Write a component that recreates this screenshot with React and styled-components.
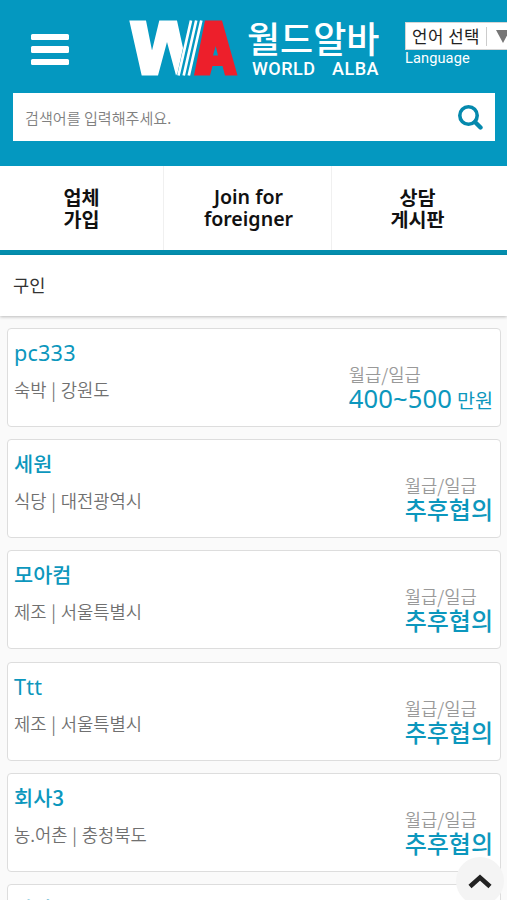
import React from "react";
import styled, { createGlobalStyle } from "styled-components";

const Global = createGlobalStyle`
  * { box-sizing: border-box; }
  html, body { margin: 0; height: 900px; overflow: hidden; }
  body {
    background: #fafafa;
    font-family: "Noto Sans", "Noto Sans CJK KR", sans-serif;
    color: #333;
  }
`;
const Page = styled.div`
  position: relative;
  width: 507px;
  height: 900px;
  overflow: hidden;
`;
const Header = styled.header`
  height: 166px;
  background: #0498c0;
`;
const TopBar = styled.div`
  display: flex;
  align-items: flex-start;
  height: 93px;
  padding-left: 31px;
`;
const MenuButton = styled.button`
  display: flex;
  flex: none;
  flex-direction: column;
  gap: 6px;
  width: 38px;
  margin: 34px 60px 0 0;
  padding: 0;
  border: 0;
  background: none;
`;
const MenuBar = styled.span`
  height: 6.4px;
  border-radius: 1.5px;
  background: #fff;
`;
const Brand = styled.a`
  display: flex;
  flex: none;
  width: 276px;
  padding-top: 20px;
  color: #fff;
`;
const BrandText = styled.div`
  display: flex;
  flex-direction: column;
  margin-left: 8px;
  white-space: nowrap;
`;
const BrandName = styled.span`
  height: 38px;
  font: 500 36px/35px "Noto Sans CJK KR", sans-serif;
`;
const BrandLatin = styled.span`
  display: flex;
  justify-content: space-between;
  width: 127px;
  margin-left: 5px;
  font: 500 18px/21px Roboto, sans-serif;
  letter-spacing: 0.5px;
`;
const Language = styled.div`
  flex: none;
  padding-top: 22px;
  color: #fff;
`;
const LanguageSelect = styled.div`
  display: flex;
  align-items: center;
  width: 120px;
  height: 28px;
  padding-left: 6px;
  border: 1px solid #d5d5d5;
  background: #fff;
  color: #222;
  font: 400 16.8px/24px "Noto Sans CJK KR", sans-serif;
  letter-spacing: 0.5px;
  white-space: nowrap;
`;
const SelectArrow = styled.span`
  display: flex;
  margin-left: 6px;
  padding: 3px 0 3px 9px;
  border-left: 1px solid #ccc;
`;
const LanguageLabel = styled.div`
  font: 400 14.6px/16px Roboto, sans-serif;
  letter-spacing: 0.1px;
`;
const SearchBox = styled.div`
  display: flex;
  align-items: center;
  justify-content: space-between;
  height: 48px;
  margin: 0 12px 0 13px;
  padding: 0 12px;
  background: #fff;
`;
const Placeholder = styled.span`
  color: #808080;
  font: 350 15.1px/20px "Noto Sans CJK KR", sans-serif;
`;
const Tabs = styled.nav`
  display: grid;
  grid-template-columns: 164px 168px 1fr;
  height: 89px;
  border-bottom: 5px solid #048eae;
  background: #fff;
`;
const Tab = styled.a`
  padding: 21px 0 0;
  border-right: 1px solid #f0f0f0;
  color: #111;
  text-align: center;
  font-size: 19.6px;
  font-weight: 600;
  line-height: 22px;
  white-space: pre-line;
  &:nth-child(2) { padding-top: 20px; padding-left: 2px; }
  &:last-child { border: 0; padding-right: 4px; }
`;
const Heading = styled.h1`
  height: 61px;
  margin: 0;
  padding-left: 13px;
  background: #fff;
  box-shadow: 0 1px 3px rgba(0, 0, 0, 0.25);
  font: 400 17.6px/59px "Noto Sans CJK KR", sans-serif;
`;
const List = styled.main`
  display: grid;
  grid-auto-rows: 99px;
  gap: 12.2px;
  padding: 12px 6px 0 7px;
`;
const Card = styled.article`
  display: flex;
  justify-content: space-between;
  padding: 9px 7px 0 6px;
  border: 1px solid #ddd;
  border-radius: 4px;
  background: #fff;
`;
const Company = styled.h2`
  margin: 0;
  color: #0c97bd;
  font: 500 20.8px/29px "Noto Sans CJK KR", sans-serif;
  ${(p) => p.$latin && `
    font-family: "Noto Sans", sans-serif;
    font-size: 21.6px;
    font-weight: 450;
    letter-spacing: 0.2px;
  `}
`;
const Info = styled.p`
  margin: 10px 0 0;
  color: #707070;
  font: 350 17.7px/25px "Noto Sans CJK KR", sans-serif;
  word-spacing: 0.8px;
`;
const Pay = styled.div`
  padding-top: 24px;
  white-space: nowrap;
`;
const PayLabel = styled.div`
  color: #999;
  font: 350 17.7px/24px "Noto Sans CJK KR", sans-serif;
`;
const Amount = styled.div`
  height: 24px;
  color: #0c97bd;
  font: 500 24px/24px "Noto Sans CJK KR", sans-serif;
`;
const Figure = styled.span`
  font-family: "Noto Sans", sans-serif;
  font-size: 25.6px;
  font-weight: 450;
  letter-spacing: 0.1px;
`;
const Unit = styled.span`
  margin-left: 5px;
  font-size: 19.6px;
  font-weight: 400;
`;
const TopButton = styled.button`
  position: absolute;
  right: 3px;
  bottom: -5px;
  display: flex;
  align-items: center;
  justify-content: center;
  width: 48px;
  height: 48px;
  padding: 0;
  border: 0;
  border-radius: 50%;
  background: #f4f4f4;
`;

const Logo = () => (
  <svg width="110" height="57" viewBox="0 0 110 57">
    <path fill="#fff" d="M.3.5H17L23 30.500 30.300.5H48L54 28 48.500 53 47 55.500 38 22 29 55.500H12.700Z" />
    <path stroke="#fff" strokeWidth="2.700" d="M62 .5 49.500 55.500M67.200 .5 54.700 55.500M72.300 .5 59.800 55.500" />
    <path fill="#ed1f2b" fillRule="evenodd" d="M76 .5H93L108.500 55.500H96L93.500 46H83.500L81 55.500H65ZM86.700 26 84 35.500H89Z" />
  </svg>
);

const jobs = [
  { name: "pc333", latin: true, info: "숙박 | 강원도", pay: "400~500" },
  { name: "세원", info: "식당 | 대전광역시" },
  { name: "모아컴", info: "제조 | 서울특별시" },
  { name: "Ttt", latin: true, info: "제조 | 서울특별시" },
  { name: "회사3", info: "농.어촌 | 충청북도" },
  { name: "하나", info: "제조 | 서울특별시" },
];

export default function App() {
  return (
    <Page>
      <Global />
      <Header>
        <TopBar>
          <MenuButton aria-label="메뉴"><MenuBar /><MenuBar /><MenuBar /></MenuButton>
          <Brand>
            <Logo />
            <BrandText>
              <BrandName>월드알바</BrandName>
              <BrandLatin><span>WORLD</span><span>ALBA</span></BrandLatin>
            </BrandText>
          </Brand>
          <Language>
            <LanguageSelect>
              언어 선택
              <SelectArrow>
                <svg width="14" height="13" viewBox="0 0 14 13"><path fill="#767676" d="M0 0H14L7 13Z" /></svg>
              </SelectArrow>
            </LanguageSelect>
            <LanguageLabel>Language</LanguageLabel>
          </Language>
        </TopBar>
        <SearchBox>
          <Placeholder>검색어를 입력해주세요.</Placeholder>
          <svg width="25" height="25" viewBox="0 0 25 25" fill="none" stroke="#0589ad">
            <circle cx="10.500" cy="10.500" r="8.700" strokeWidth="3.600" />
            <path d="M17 17 22.500 22.500" strokeWidth="4.400" strokeLinecap="round" />
          </svg>
        </SearchBox>
      </Header>
      <Tabs>
        <Tab>{"업체\n가입"}</Tab>
        <Tab>{"Join for\nforeigner"}</Tab>
        <Tab>{"상담\n게시판"}</Tab>
      </Tabs>
      <Heading>구인</Heading>
      <List>
        {jobs.map((job) => (
          <Card key={job.name}>
            <div>
              <Company $latin={job.latin}>{job.name}</Company>
              <Info>{job.info}</Info>
            </div>
            <Pay>
              <PayLabel>월급/일급</PayLabel>
              <Amount>
                {job.pay ? <><Figure>{job.pay}</Figure><Unit>만원</Unit></> : "추후협의"}
              </Amount>
            </Pay>
          </Card>
        ))}
      </List>
      <TopButton aria-label="맨 위로">
        <svg width="24" height="16" viewBox="0 0 24 16" fill="none" stroke="#222" strokeWidth="4.600">
          <path d="M2 13.500 12 4.500 22 13.500" />
        </svg>
      </TopButton>
    </Page>
  );
}
